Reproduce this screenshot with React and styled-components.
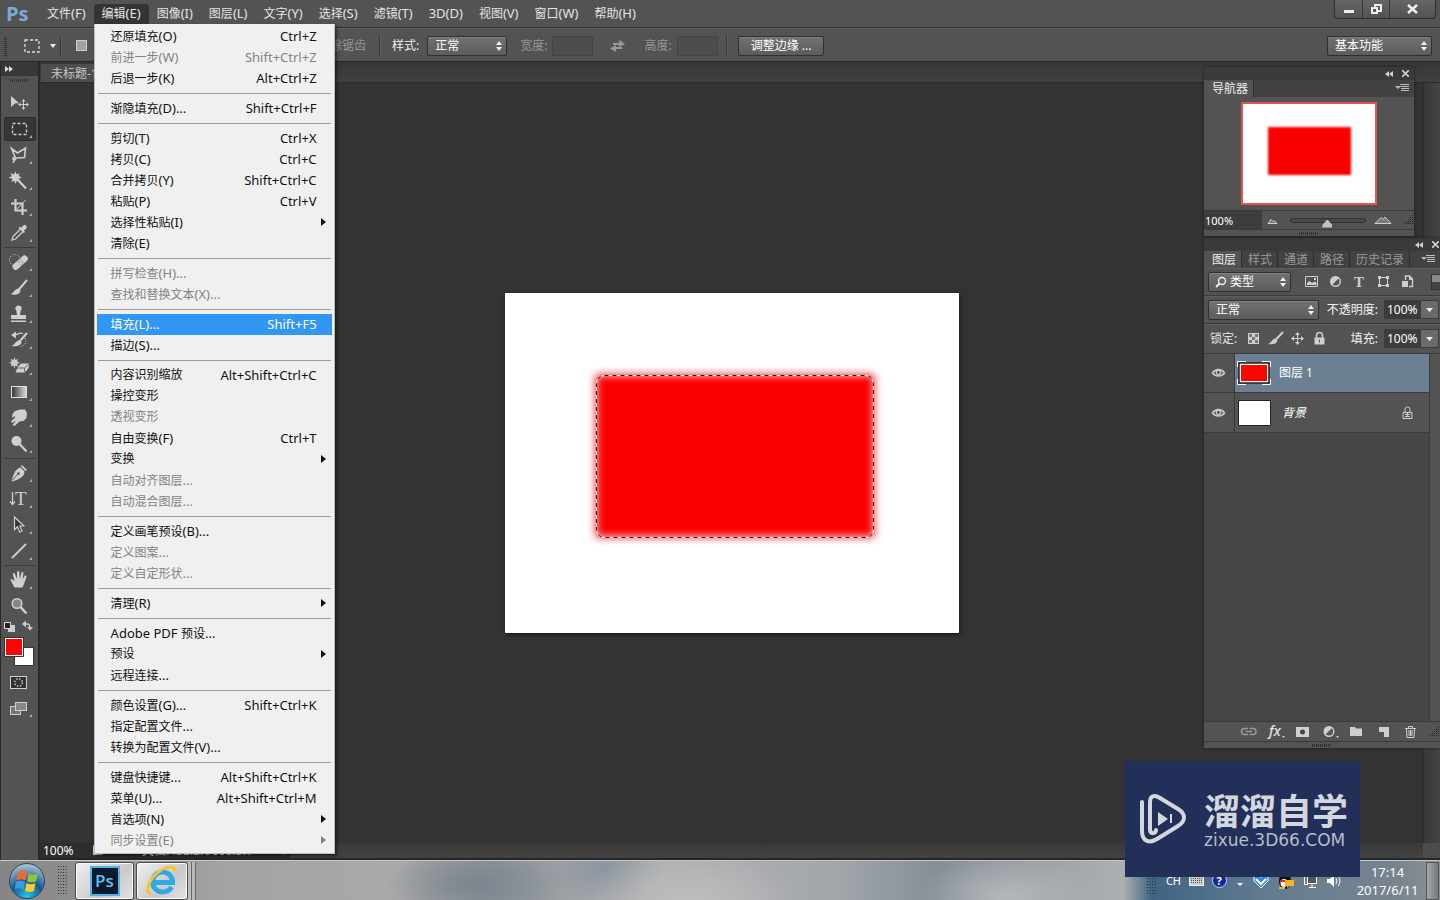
import React, { useState } from 'react';
import styled, { createGlobalStyle } from 'styled-components';

const GlobalStyle = createGlobalStyle`
  * {
    box-sizing: border-box;
  }
  body {
    margin: 0;
    overflow: hidden;
    background: #333;
    color: #e4e4e4;
    font: 12px/16px 'Noto Sans', 'Noto Sans CJK SC', sans-serif;
  }
  button, input, select {
    margin: 0;
    padding: 0;
    border: 0;
    border-radius: 0;
    background: none;
    color: inherit;
    font: inherit;
  }
  ul {
    margin: 0;
    padding: 0;
    list-style: none;
  }
  svg {
    display: block;
    flex: none;
  }
`;

const Desktop = styled.div`
  display: flex;
  flex-direction: column;
  height: 100vh;
`;

const MenuBar = styled.header`
  position: relative;
  z-index: 3;
  display: flex;
  align-items: center;
  height: 28px;
  background: #535353;
  border-bottom: 1px solid #303030;
`;

const Logo = styled.div`
  width: 39px;
  padding-left: 6px;
  color: #7ea9d6;
  font: bold 20px/24px 'Open Sans', sans-serif;
`;

const MenuList = styled.ul`
  display: flex;
  flex: 1;
`;

const MenuSlot = styled.li`
  position: relative;
`;

const MenuButton = styled.button`
  display: block;
  height: 20px;
  padding: 0 8px;
  border-radius: 3px 3px 0 0;
  background: ${(p) => (p.$open ? '#343434' : 'none')};
  white-space: nowrap;
`;

const Latin = styled.span`
  font-size: 13px;
`;

const DropDown = styled.ul`
  position: absolute;
  top: 20px;
  left: 0;
  width: 241px;
  padding: 2px;
  background: #f0f0f0;
  border: 1px solid #bdbdbd;
  border-top-width: 0;
  box-shadow: 2px 2px 3px rgba(0, 0, 0, 0.5);
`;

const DropItem = styled.button`
  display: flex;
  align-items: center;
  width: 100%;
  height: 21px;
  padding: 0 5px 0 14px;
  background: ${(p) => (p.$active ? '#3296f3' : 'none')};
  color: ${(p) => (p.$active ? '#fff' : p.disabled ? '#838383' : '#111')};
  white-space: nowrap;
`;

const DropLabel = styled.span`
  flex: 1;
  text-align: left;
`;

const Shortcut = styled.span`
  padding-right: 10px;
  font-size: 13px;
`;

const Divider = styled.li`
  height: 9px;
  padding: 4px 1px;
  background: #9c9c9c content-box;
`;

const WindowButtons = styled.div`
  display: flex;
  align-self: flex-start;
  height: 19px;
  margin-right: 4px;
  border: 1px solid #303030;
  border-top: 0;
  border-radius: 0 0 4px 4px;
  background: linear-gradient(#666, #525252);
`;

const WindowButton = styled.button`
  display: grid;
  place-items: center;
  width: ${(p) => (p.$wide ? 46 : 27)}px;
  border-left: 1px solid #383838;
  &:first-child {
    border-left: 0;
  }
`;

const OptionsBar = styled.div`
  display: flex;
  align-items: center;
  height: 34px;
  padding: 1px 8px 0 4px;
  border-top: 1px solid #626262;
  border-bottom: 1px solid #282828;
  background: #535353;
  white-space: nowrap;
`;

const Grip = styled.span`
  width: ${(p) => (p.$vertical ? 3 : 20)}px;
  height: ${(p) => (p.$vertical ? 20 : 3)}px;
  background: repeating-linear-gradient(
    ${(p) => (p.$vertical ? '0deg' : '90deg')},
    #333 0 1px,
    transparent 1px 2px
  );
`;

const OptionButton = styled.button`
  display: flex;
  align-items: center;
  gap: 10px;
  width: 53px;
  padding-left: 17px;
`;

const Rule = styled.span`
  width: 2px;
  height: 22px;
  margin-left: ${(p) => p.$left || 0}px;
  border-left: 1px solid #3a3a3a;
  border-right: 1px solid #5e5e5e;
`;

const Swatchlet = styled.span`
  width: 11px;
  height: 11px;
  margin-left: 14px;
  border: 1px solid #ccc;
  background: #a2a2a2;
`;

const AntiAlias = styled.label`
  display: flex;
  justify-content: flex-end;
  width: 279px;
  margin-right: 13px;
  color: #969696;
`;

const AntiAliasBox = styled.input`
  width: 12px;
  height: 12px;
  margin: 2px 4px;
`;

const Field = styled.label`
  display: flex;
  align-items: center;
  gap: ${(p) => p.$gap}px;
  margin-left: ${(p) => p.$left || 0}px;
  color: ${(p) => (p.$dim ? '#969696' : '#f0f0f0')};
`;

const SizeInput = styled.input`
  width: 41px;
  height: 20px;
  border: 1px solid #454545;
  background: #4d4d4d;
`;

const SelectShell = styled.span`
  display: grid;
  grid-template-columns: 1fr 14px;
  align-items: center;
  width: ${(p) => p.$width}px;
  height: 20px;
  border: 1px solid #303030;
  border-radius: 2px;
  background: linear-gradient(#717171, #5c5c5c);
  box-shadow: inset 0 1px 0 #808080;
  color: #fff;
  select {
    grid-area: 1 / 1 / 2 / 3;
    height: 18px;
    padding-left: ${(p) => p.$indent || 7}px;
    appearance: none;
    outline: none;
  }
  option {
    color: #111;
  }
  .arrows {
    grid-area: 1 / 2;
    margin-left: 3px;
    pointer-events: none;
  }
  .lead {
    grid-area: 1 / 1;
    margin-left: 6px;
    pointer-events: none;
  }
`;

const SwapButton = styled.button`
  margin: 0 19px 0 17px;
  color: #999;
`;

const RefineButton = styled.button`
  height: 20px;
  margin-left: 10px;
  padding: 0 12px;
  border: 1px solid #303030;
  border-radius: 2px;
  background: linear-gradient(#717171, #5c5c5c);
  box-shadow: inset 0 1px 0 #808080;
  line-height: 16px;
  color: #fff;
`;

const Spacer = styled.span`
  flex: 1;
`;

const Workspace = styled.main`
  position: relative;
  display: flex;
  flex: 1;
  min-height: 0;
`;

const Toolbox = styled.aside`
  display: flex;
  flex-direction: column;
  align-items: center;
  width: 40px;
  border: solid #2a2a2a;
  border-width: 0 2px 0 1px;
  background: #535353;
  color: #cfcfcf;
`;

const ToolboxHead = styled.div`
  align-self: stretch;
  height: 14px;
  padding: 4px;
  background: #383838;
`;

const ToolGrip = styled.div`
  height: 14px;
  padding-top: 3px;
`;

const ToolButton = styled.button`
  width: 32px;
  height: 24px;
  margin: 1px 0;
  border-radius: 3px;
  background: ${(p) => (p.$on ? '#363636' : 'none')};
  box-shadow: ${(p) => (p.$on ? 'inset 0 0 0 1px #2c2c2c' : 'none')};
`;

const ToolRule = styled.span`
  width: 30px;
  height: 3px;
  padding: 1px 0;
  background: #3b3b3b content-box;
`;

const DocumentArea = styled.section`
  display: flex;
  flex: 1;
  flex-direction: column;
  min-width: 0;
`;

const TabStrip = styled.div`
  display: flex;
  height: 21px;
  padding-top: 2px;
  padding-left: 1px;
  border-bottom: 1px solid #2a2a2a;
  background: linear-gradient(#363636, #404040);
`;

const DocumentTab = styled.button`
  padding: 2px 10px 0;
  background: #4d4d4d;
  color: #c9c9c9;
`;

const Stage = styled.div`
  display: grid;
  flex: 1;
  grid-template-columns: 1fr 17px;
  min-height: 0;
`;

const Canvas = styled.div`
  display: grid;
  place-items: center;
  background: #333;
  svg {
    box-shadow: 1px 2px 4px rgba(0, 0, 0, 0.5);
  }
`;

const ScrollTrack = styled.div`
  border-left: 1px solid #2c2c2c;
  background: linear-gradient(90deg, #383838, #454545);
`;

const StatusBar = styled.footer`
  display: flex;
  height: 17px;
  border-bottom: 2px solid #262626;
  background: linear-gradient(#393939, #424242);
  line-height: 15px;
`;

const StatusInfo = styled.div`
  display: flex;
  align-items: center;
  width: 250px;
  padding-left: 3px;
  background: #2d2d2d;
`;

const ZoomLevel = styled.span`
  width: 50px;
  color: #fff;
`;

const DocSize = styled.span`
  flex: 1;
  padding-left: 38px;
  white-space: nowrap;
`;

const ScrollCorner = styled.span`
  width: 17px;
  margin-left: auto;
  background: #4c4c4c;
`;

const Dock = styled.div`
  position: absolute;
  top: 5px;
  right: 0;
  bottom: 112px;
  display: flex;
  flex-direction: column;
  gap: 2px;
  width: 236px;
`;

const Panel = styled.section`
  display: flex;
  flex-direction: column;
  flex: ${(p) => (p.$grow ? 1 : 'none')};
  width: ${(p) => (p.$grow ? '100%' : '210px')};
  overflow: hidden;
  border-radius: 4px 4px 0 0;
  background: #535353;
  box-shadow: 0 0 3px #1c1c1c;
`;

const PanelHead = styled.div`
  display: flex;
  align-items: center;
  justify-content: flex-end;
  gap: 9px;
  height: 13px;
  padding-right: ${(p) => p.$pad}px;
  background: #3a3a3a;
  color: #d0d0d0;
`;

const PanelTabs = styled.div`
  display: flex;
  align-items: center;
  height: 17px;
  background: #424242;
  color: #c8c8c8;
`;

const PanelTab = styled.button`
  align-self: stretch;
  padding: 1px 6px 0 ${(p) => (p.$on ? 8 : 6)}px;
  background: ${(p) => (p.$on ? '#535353' : '#424242')};
  box-shadow: inset -1px 0 0 #2e2e2e;
  color: ${(p) => (p.$on ? '#eee' : '#999')};
  white-space: nowrap;
`;

const PreviewBox = styled.div`
  display: grid;
  place-items: center;
  height: 114px;
  border-bottom: 1px solid #3a3a3a;
`;

const ZoomRow = styled.div`
  display: flex;
  align-items: center;
  height: 18px;
  color: #d0d0d0;
`;

const ZoomInput = styled.input`
  width: 58px;
  height: 18px;
  padding-left: 1px;
  background: #3d3d3d;
  color: #fff;
  font-size: 11px;
`;

const ZoomSlider = styled.input`
  width: 76px;
  height: 14px;
  margin: 0 8px 0 9px;
  appearance: none;
  background: none;
  &::-webkit-slider-runnable-track {
    height: 5px;
    border: 1px solid #333;
    border-radius: 2px;
    background: #484848;
  }
  &::-webkit-slider-thumb {
    width: 10px;
    height: 8px;
    margin-top: 1px;
    appearance: none;
    background: #c4c4c4;
    clip-path: polygon(50% 0, 100% 70%, 100% 100%, 0 100%, 0 70%);
  }
`;

const PanelFoot = styled.div`
  display: grid;
  place-items: center;
  height: 7px;
  border-top: 1px solid #3a3a3a;
`;

const LayerRow = styled.div`
  display: flex;
  align-items: center;
  height: ${(p) => p.$height || 28}px;
  padding-left: ${(p) => p.$indent || 4}px;
  border-bottom: 1px solid #3a3a3a;
  box-shadow: inset 0 1px 0 #5e5e5e;
  white-space: nowrap;
`;

const IconGroup = styled.div`
  display: flex;
  gap: ${(p) => p.$gap}px;
  margin-left: ${(p) => p.$left}px;
  color: #cfcfcf;
`;

const IconButton = styled.button`
  display: block;
`;

const FilterSwitch = styled.button`
  width: 9px;
  height: 16px;
  margin-left: auto;
  border: 1px solid #333;
  border-right: 0;
  background: linear-gradient(#888 50%, #444 50%);
`;

const PercentField = styled.label`
  display: flex;
  align-items: center;
  margin-left: auto;
  padding-right: 1px;
  color: #f4f4f4;
  input {
    width: 36px;
    height: 19px;
    margin-left: 6px;
    padding-left: 3px;
    background: #3c3c3c;
    color: #fff;
  }
  button {
    display: grid;
    place-items: center;
    width: 19px;
    height: 19px;
    border: 1px solid #3c3c3c;
    background: #6a6a6a;
  }
`;

const LayerList = styled.ul`
  flex: 1;
  margin-right: 10px;
  border-right: 1px solid #3a3a3a;
  background: #464646;
`;

const LayerItem = styled.li`
  display: flex;
  align-items: center;
  height: ${(p) => (p.$on ? 39 : 40)}px;
  border-bottom: 1px solid #3a3a3a;
  background: ${(p) => (p.$on ? '#6d8093' : '#535353')};
`;

const EyeButton = styled.button`
  display: grid;
  place-items: center;
  align-self: stretch;
  width: 31px;
  border-right: 1px solid #3a3a3a;
  background: #535353;
  color: #c8c8c8;
`;

const Thumbnail = styled.svg`
  margin-left: 1px;
`;

const LayerName = styled.span`
  flex: 1;
  padding-left: ${(p) => (p.$italic ? 10 : 7)}px;
  color: #fff;
  font-style: ${(p) => (p.$italic ? 'italic' : 'normal')};
`;

const LayerLock = styled.span`
  margin-right: 13px;
  color: #cfcfcf;
`;

const LayerActions = styled.div`
  display: flex;
  align-items: center;
  justify-content: flex-end;
  gap: 11px;
  height: 20px;
  border-top: 1px solid #3a3a3a;
  color: #cfcfcf;
`;

const Watermark = styled.div`
  position: absolute;
  z-index: 4;
  right: 80px;
  bottom: 23px;
  display: flex;
  align-items: center;
  gap: 17px;
  width: 235px;
  height: 116px;
  padding-left: 14px;
  background: #212f59;
  color: #d5d7de;
`;

const BrandName = styled.div`
  font: bold 36px/36px 'Noto Sans CJK SC', sans-serif;
`;

const BrandUrl = styled.div`
  margin-top: 5px;
  color: #b6bccb;
  font: 17px/16px 'DejaVu Sans', sans-serif;
`;

const Taskbar = styled.footer`
  display: flex;
  align-items: center;
  height: 40px;
  border-top: 1px solid #c4c8cc;
  background:
    radial-gradient(ellipse 90px 40px at 33% 60%, #7c858e, transparent),
    radial-gradient(ellipse 110px 50px at 48% 100%, #bebebe, transparent),
    radial-gradient(ellipse 60px 40px at 42% 20%, #8b95a0, transparent),
    radial-gradient(ellipse 90px 40px at 70% 90%, #b4b8bc, transparent),
    linear-gradient(90deg, #858585, #a4a4a4 16%, #a9a9a9 28%, #8d949b 34%, #b0b0b0 45%, #a2a7ac 58%, #868e97 65%, #adb0b3 78%, #3f6482 80%, #637c90 88%, #78848e 97%, #8c9296);
`;

const StartButton = styled.button`
  margin: 0 13px 0 9px;
`;

const TaskButton = styled.button`
  display: grid;
  place-items: center;
  width: ${(p) => p.$width}px;
  height: 38px;
  margin-left: ${(p) => p.$left}px;
  border: 1px solid #4b4b4b;
  border-radius: 3px;
  background: linear-gradient(135deg, #f0f0f0, #cacaca 60%, #e4e4e4);
  box-shadow: inset 0 0 0 1px #fafafa;
`;

const StackEdge = styled.span`
  width: 4px;
  height: 38px;
  border-right: 1px solid #666;
  background: #bbb;
`;

const Tray = styled.div`
  display: flex;
  align-items: center;
  gap: 8px;
  margin-left: auto;
`;

const TrayText = styled.span`
  margin-left: 2px;
  color: #fff;
  font-size: 11px;
`;

const Clock = styled.div`
  width: 67px;
  margin: 0 5px 0 12px;
  color: #fff;
  font: 13px/18px 'Noto Sans', sans-serif;
  text-align: center;
`;

const ShowDesktop = styled.button`
  width: 13px;
  height: 38px;
  margin-right: 1px;
  border: 1px solid #555;
  background: linear-gradient(90deg, #a5a8aa, #75797c);
`;

const toolIcons = {
  move: (
    <>
      <path fill="currentColor" d="M2 3l8 7-4 .6L2 14z" />
      <path stroke="currentColor" fill="none" d="M14.500 7v9M10 11.500h9" />
      <path fill="currentColor" d="M14.500 6l2 2.500h-4zM14.500 17l2-2.500h-4zM9 11.500l2.500-2v4zM20 11.500l-2.500-2v4z" />
    </>
  ),
  marquee: <path stroke="currentColor" fill="none" strokeWidth="1.300" strokeDasharray="3 2" d="M3.500 4.500h14v11h-14z" />,
  lasso: (
    <path stroke="currentColor" fill="none" strokeWidth="1.600" d="M2.500 3.500L8.500 8l8-5-1 9.500-9 .5zM6.500 12.500c-2-.5-3.500 1-2 2.200 2 .8 2.500-1 2-2.200M5.500 15l-1.500 3" />
  ),
  wand: (
    <>
      <path fill="currentColor" d="M6.500 .500l1.200 3 3-1.500-1 3 3.300 1.500-3.300 1.300 1.200 3-3-1-1.400 3.200-1.200-3.200-3 1.200 1.300-3L-.500 6.500l3.300-1.300L1.500 2l3.300 1.400z" />
      <path stroke="currentColor" strokeWidth="2.200" d="M9 9l8 8.500" />
    </>
  ),
  crop: (
    <>
      <path stroke="currentColor" fill="none" strokeWidth="2.200" d="M6.500 2v11.500H18M2 6.500h11.500V18" />
      <path stroke="currentColor" d="M8 12l8.500-9" />
    </>
  ),
  eyedropper: (
    <>
      <path stroke="currentColor" fill="none" strokeWidth="1.300" d="M11 6.500L4 13.500 3 17l3.500-1 7-7" />
      <path fill="currentColor" d="M9.500 5l1.200-1.200 1.600 1 2-2.300c2-1.500 4.500 1 3 3l-2.300 2 1 1.600-1.200 1.200z" />
    </>
  ),
  heal: (
    <>
      <circle cx="6" cy="8" r="5.500" stroke="currentColor" fill="none" strokeDasharray="1 1.500" />
      <rect x="2" y="7.500" width="18" height="6.500" rx="3" fill="currentColor" transform="rotate(-42 11 10.500)" />
      <path stroke="#666" strokeDasharray="1 1" d="M9 9l4 4.500M11 7.500l4 4.500" />
    </>
  ),
  brush: (
    <>
      <path stroke="currentColor" strokeWidth="2" d="M18 2l-8 9.500" />
      <path fill="currentColor" d="M9.500 10.500l2 2c0 3-4 5.500-10 3.500 3-.5 4-5 8-5.500z" />
    </>
  ),
  stamp: (
    <path fill="currentColor" d="M9.500 1.500a3 3 0 0 1 2.200 5.200L11 11h6v4H2v-4h6l-.7-4.300A3 3 0 0 1 9.500 1.500zM2 16.500h15V18H2z" />
  ),
  history: (
    <>
      <path stroke="currentColor" strokeWidth="2" d="M18 3l-7 8" />
      <path fill="currentColor" d="M10.500 10l2 2c0 3-4 5-10 4 3-1 4-5 8-6zM2 5l5-3.500v7z" />
      <path stroke="currentColor" fill="none" strokeWidth="1.300" d="M5 4.500h3q3-2 6-1" />
      <path stroke="currentColor" fill="none" strokeDasharray="1 1.500" d="M16 8c2 4 0 8-4 8.500" />
    </>
  ),
  eraser: (
    <>
      <path fill="currentColor" d="M5.500 1l1 3L9 3 8.200 5.800l3 1-3 1 1 2.700-2.700-1-1 3-1-3-2.800 1 1-2.700-3-1 3-1L1.700 3l2.800 1z" />
      <path fill="currentColor" d="M12 7.500h8.500L19 13l-3.500 3.500h-9l2-5z" />
      <path stroke="#666" fill="none" d="M8 12h7.500v3.500M15.500 12L20 8" />
    </>
  ),
  gradient: <rect x="2.500" y="4.500" width="15" height="11" fill="url(#toolGradient)" stroke="#e0e0e0" />,
  smudge: (
    <path fill="currentColor" d="M3.500 6L6 3l5-1.500h5L18 5l-.5 5-3 3-4 .5-5 4.500-2-1 3.500-4.500-4 2.500-1-1.500L6.500 9 5 8.500 3 10z" />
  ),
  dodge: (
    <>
      <circle cx="7.500" cy="7" r="5" fill="currentColor" />
      <path stroke="currentColor" strokeWidth="2.200" d="M10.500 10l7 7.500" />
    </>
  ),
  pen: (
    <>
      <path fill="currentColor" d="M13 2l5 5-1.500 1-4.500-4.500zM11.500 4.500l4 4c0 5-4 7-12 10l-1-1C5 10 7 5.500 11.500 4.500z" />
      <circle cx="9.500" cy="10.500" r="1.200" fill="#555" />
      <path stroke="#555" d="M3 17.500L9 11" />
    </>
  ),
  type: (
    <>
      <text x="6" y="16" fill="currentColor" fontFamily="Liberation Serif" fontSize="19">T</text>
      <path stroke="currentColor" fill="none" strokeWidth="1.300" d="M3.500 3v12M1 12.500l2.500 3 2.500-3" />
    </>
  ),
  select: <path stroke="currentColor" fill="#333" strokeWidth="1.200" d="M5.500 2v12.500l3-2.800 2.200 5.300 2.300-1-2.200-5h4z" />,
  line: <path stroke="currentColor" strokeWidth="1.800" d="M3 17L17 3" />,
  hand: (
    <path fill="currentColor" d="M5.500 17.500L1.500 10c0-1.500 1.500-1.500 2.500 0l1.500 1L3.800 4c.3-1.300 1.700-1.300 2.200 0l2 5L8 2c.5-1.300 2-1.300 2.300 0l.5 7 1.700-6.500c.7-1 2-.7 2 .5L13.500 9.500l2-3.500c1-1 2.200-.3 2 1L15 14l-1.500 3.500z" />
  ),
  zoom: (
    <>
      <circle cx="8" cy="7.500" r="4.800" stroke="currentColor" strokeWidth="1.500" fill="#858585" />
      <path stroke="currentColor" strokeWidth="2.500" d="M11.500 11l6 6.500" />
    </>
  ),
  mask: (
    <>
      <rect x="1.500" y="4.500" width="16" height="12" fill="#333" stroke="currentColor" />
      <circle cx="9.500" cy="10.500" r="3.800" fill="none" stroke="currentColor" strokeWidth="1.400" strokeDasharray="1.500 1.500" />
    </>
  ),
  screen: (
    <>
      <rect x="1.500" y="8.500" width="10" height="8" fill="#777" stroke="currentColor" />
      <rect x="6.500" y="4.500" width="11" height="8" fill="#888" stroke="currentColor" />
    </>
  ),
};

const toolGroups = [
  ['move', 'marquee', 'lasso', 'wand', 'crop', 'eyedropper'],
  ['heal', 'brush', 'stamp', 'history', 'eraser', 'gradient', 'smudge', 'dodge'],
  ['pen', 'type', 'select', 'line'],
  ['hand', 'zoom'],
];

const withoutFlyout = ['move', 'zoom', 'mask'];

const panelIcons = {
  image: (
    <>
      <path fill="none" stroke="currentColor" d="M1.500 2.500h12v10h-12z" />
      <path fill="currentColor" d="M3 11V9l2.500-2L8 9l3-1.500 1.500 1.500v2zM10 4h2v2h-2z" />
    </>
  ),
  adjust: (
    <>
      <circle cx="7.500" cy="7.500" r="4.800" fill="#555" stroke="currentColor" strokeWidth="1.400" />
      <path fill="currentColor" d="M11 4a5 5 0 0 1-7 7z" transform="rotate(180 7.500 7.500)" />
    </>
  ),
  text: <text x="2" y="13" fill="currentColor" fontFamily="Liberation Serif" fontSize="15" fontWeight="bold">T</text>,
  shape: (
    <>
      <path fill="none" stroke="currentColor" d="M3.500 3.500h8v8h-8z" />
      <path fill="currentColor" d="M2 2h3v3H2zM10 2h3v3h-3zM2 10h3v3H2zM10 10h3v3h-3z" />
    </>
  ),
  smart: (
    <>
      <path fill="none" stroke="currentColor" strokeWidth="1.400" d="M5.500 6V2h4l3 3v7.500H9" />
      <path fill="currentColor" d="M2 7h6v6H2zM9 2v4h4z" />
    </>
  ),
  pixels: (
    <>
      <path fill="currentColor" d="M2 2h11v11H2z" />
      <path fill="#777" d="M3 3h3v3H3zM9 3h3v3H9zM6 6h3v3H6zM3 9h3v3H3zM9 9h3v3H9z" />
    </>
  ),
  paint: (
    <>
      <path stroke="currentColor" strokeWidth="2" d="M15 1L8 8.500" />
      <path fill="currentColor" d="M7 7.500l2.500 2c-.5 3-4 4.500-9.500 3.500 3-.5 3.500-4.500 7-5.500z" />
    </>
  ),
  position: (
    <>
      <path stroke="currentColor" d="M7.500 2v11M2 7.500h11" />
      <path fill="currentColor" d="M7.500 1L10 4H5zM7.500 14l2.500-3H5zM1 7.500L4 5v5zM14 7.500L11 5v5z" />
    </>
  ),
  lock: (
    <>
      <path fill="none" stroke="currentColor" strokeWidth="1.500" d="M4.500 7V4.500a3 3 0 0 1 6 0V7" />
      <path fill="currentColor" d="M2.500 6.500h10v7h-10z" />
      <path stroke="#555" d="M7.500 8.500v3" />
    </>
  ),
  lockOutline: (
    <>
      <path fill="none" stroke="currentColor" d="M5 7V4.500a2.500 2.500 0 0 1 5 0V7M3 7.500h9v6H3zM5 9.500h5M5 11.500h5" />
      <path stroke="currentColor" d="M7.500 8v4" />
    </>
  ),
  link: (
    <path fill="none" stroke="#999" strokeWidth="1.500" d="M7 4.500H3.500a3 3 0 0 0 0 6H7M8.500 4.500H12a3 3 0 0 1 0 6H8.500M4.500 7.500h6.500" />
  ),
  fx: (
    <>
      <text x="1" y="12" fill="#e4e4e4" fontFamily="Noto Sans" fontStyle="italic" fontWeight="500" fontSize="14">fx</text>
      <path fill="currentColor" d="M14 12h3l-1.500 2z" />
    </>
  ),
  addMask: (
    <>
      <path fill="currentColor" d="M1 3h13v10H1z" />
      <circle cx="7.500" cy="8" r="2.500" fill="#444" />
    </>
  ),
  fillLayer: (
    <>
      <circle cx="7" cy="7.500" r="4.800" fill="#555" stroke="currentColor" strokeWidth="1.400" />
      <path fill="currentColor" d="M11 4a5 5 0 0 1-7 7z" transform="rotate(180 7 7.500)" />
      <path fill="currentColor" d="M14 12h3l-1.500 2z" />
    </>
  ),
  folder: <path fill="currentColor" d="M1 3h5l1 1.500h6V12H1z" />,
  page: <path fill="currentColor" d="M3 3h10v10H8V8H3z" />,
  trash: (
    <path fill="none" stroke="currentColor" d="M2 4.500h11M5.500 4V2.500h4V4M3.500 5l.5 8.500h7l.5-8.500M6 6v6M7.500 6v6M9 6v6" />
  ),
  eye: (
    <>
      <path fill="none" stroke="currentColor" strokeWidth="1.600" d="M1.500 8C4.500 3.500 10.500 3.500 13.500 8 10.500 12 4.500 12 1.500 8z" />
      <circle cx="7.500" cy="7.500" r="2.800" fill="currentColor" />
      <circle cx="7.500" cy="7.500" r="1.300" fill="#333" />
    </>
  ),
};

const PanelIcon = ({ name }) => (
  <svg width="16" height="16" viewBox="0 0 16 16" overflow="visible">
    {panelIcons[name]}
  </svg>
);

const menus = ['文件(F)', '编辑(E)', '图像(I)', '图层(L)', '文字(Y)', '选择(S)', '滤镜(T)', '3D(D)', '视图(V)', '窗口(W)', '帮助(H)'];

const editMenu = [
  [
    { label: '还原填充(O)', keys: 'Ctrl+Z' },
    { label: '前进一步(W)', keys: 'Shift+Ctrl+Z', disabled: true },
    { label: '后退一步(K)', keys: 'Alt+Ctrl+Z' },
  ],
  [{ label: '渐隐填充(D)...', keys: 'Shift+Ctrl+F' }],
  [
    { label: '剪切(T)', keys: 'Ctrl+X' },
    { label: '拷贝(C)', keys: 'Ctrl+C' },
    { label: '合并拷贝(Y)', keys: 'Shift+Ctrl+C' },
    { label: '粘贴(P)', keys: 'Ctrl+V' },
    { label: '选择性粘贴(I)', sub: true },
    { label: '清除(E)' },
  ],
  [
    { label: '拼写检查(H)...', disabled: true },
    { label: '查找和替换文本(X)...', disabled: true },
  ],
  [{ label: '填充(L)...', keys: 'Shift+F5', active: true }, { label: '描边(S)...' }],
  [
    { label: '内容识别缩放', keys: 'Alt+Shift+Ctrl+C' },
    { label: '操控变形' },
    { label: '透视变形', disabled: true },
    { label: '自由变换(F)', keys: 'Ctrl+T' },
    { label: '变换', sub: true },
    { label: '自动对齐图层...', disabled: true },
    { label: '自动混合图层...', disabled: true },
  ],
  [
    { label: '定义画笔预设(B)...' },
    { label: '定义图案...', disabled: true },
    { label: '定义自定形状...', disabled: true },
  ],
  [{ label: '清理(R)', sub: true }],
  [{ label: 'Adobe PDF 预设...' }, { label: '预设', sub: true }, { label: '远程连接...' }],
  [
    { label: '颜色设置(G)...', keys: 'Shift+Ctrl+K' },
    { label: '指定配置文件...' },
    { label: '转换为配置文件(V)...' },
  ],
  [
    { label: '键盘快捷键...', keys: 'Alt+Shift+Ctrl+K' },
    { label: '菜单(U)...', keys: 'Alt+Shift+Ctrl+M' },
    { label: '首选项(N)', sub: true },
    { label: '同步设置(E)', sub: true, disabled: true },
  ],
];

// Latin runs are set one size larger than the Chinese around them
const MixedText = ({ text }) =>
  text
    .split(/([\x20-\x7e]+)/)
    .filter(Boolean)
    .map((part, i) => (/^[\x20-\x7e]/.test(part) ? <Latin key={i}>{part}</Latin> : part));

const EditMenu = () => (
  <DropDown>
    {editMenu.map((group, i) => (
      <React.Fragment key={i}>
        {i > 0 && <Divider />}
        {group.map((item) => (
          <li key={item.label}>
            <DropItem $active={item.active} disabled={item.disabled}>
              <DropLabel>
                <MixedText text={item.label} />
              </DropLabel>
              {item.keys && <Shortcut>{item.keys}</Shortcut>}
              {item.sub && (
                <svg width="6" height="8">
                  <path fill="currentColor" d="M0 0l5 4-5 4z" />
                </svg>
              )}
            </DropItem>
          </li>
        ))}
      </React.Fragment>
    ))}
  </DropDown>
);

const Select = ({ label, width, indent, options, children }) => (
  <SelectShell $width={width} $indent={indent}>
    <select aria-label={label}>
      {options.map((o) => (
        <option key={o}>{o}</option>
      ))}
    </select>
    {children}
    <svg className="arrows" width="8" height="10">
      <path fill="#eee" d="M1 4l3-4 3 4zM1 6l3 4 3-4z" />
    </svg>
  </SelectShell>
);

const Tool = ({ name, on, onPick }) => (
  <ToolButton $on={on} aria-label={name} onClick={onPick}>
    <svg width="32" height="24">
      <g transform="translate(5 2)">{toolIcons[name]}</g>
      {!withoutFlyout.includes(name) && <path fill="#aaa" d="M28 18v3h-3z" />}
    </svg>
  </ToolButton>
);

const Toolbar = () => {
  const [tool, setTool] = useState('marquee');
  return (
    <Toolbox>
      <ToolboxHead>
        <svg width="9" height="6">
          <path fill="#ddd" d="M0 0l4 3-4 3zM4 0l4 3-4 3z" />
        </svg>
      </ToolboxHead>
      <ToolGrip>
        <Grip as="div" />
      </ToolGrip>
      {toolGroups.map((group, i) => (
        <React.Fragment key={i}>
          {i > 0 && <ToolRule />}
          {group.map((name) => (
            <Tool key={name} name={name} on={tool === name} onPick={() => setTool(name)} />
          ))}
        </React.Fragment>
      ))}
      <svg width="34" height="50" viewBox="1 0 34 50">
        <path fill="#ccc" d="M6 6h7v7H6z" />
        <path fill="#222" stroke="#ddd" d="M2.500 3.500h6v6h-6z" />
        <path fill="none" stroke="#ccc" strokeWidth="1.500" d="M22 5h3.500q2.500 0 2.500 5" />
        <path fill="#ccc" d="M20 5l4-3.500v7zM25 8h6l-3 3.500z" />
        <path fill="#fff" stroke="#333" d="M12.500 28.500h19v18h-19z" />
        <path fill="#fa0500" stroke="#fff" d="M3.500 19.500h17v17h-17z" />
        <path fill="none" stroke="#333" d="M2.500 18.500h19v19h-19z" />
      </svg>
      <Tool name="mask" />
      <Tool name="screen" />
    </Toolbox>
  );
};

const Artwork = () => (
  <svg width="454" height="340" viewBox="0 0 454 340">
    <defs>
      <filter id="feather" x="-10%" y="-15%" width="120%" height="130%">
        <feGaussianBlur stdDeviation="4" />
      </filter>
    </defs>
    <rect width="454" height="340" fill="#fff" />
    <rect x="91" y="82" width="278" height="162" fill="#fb0600" filter="url(#feather)" />
    <rect x="91.500" y="82.500" width="277" height="162" rx="8" fill="none" stroke="#fff" />
    <rect x="91.500" y="82.500" width="277" height="162" rx="8" fill="none" stroke="#111" strokeDasharray="4 4" />
  </svg>
);

const PanelMenuIcon = () => (
  <svg width="19" height="9">
    <path fill="#bbb" d="M0 2h6L3 5z" />
    <path stroke="#bbb" d="M5 .500h9M6 2.500h8M6 4.500h8M6 6.500h8" />
  </svg>
);

const ResizeCorner = () => (
  <svg width="10" height="10">
    <path stroke="#222" strokeDasharray="1 1" d="M8 .500h2M6 2.500h4M4 4.500h6M2 6.500h8M0 8.500h10" />
  </svg>
);

const PanelHeader = ({ pad }) => (
  <PanelHead $pad={pad}>
    <svg width="8" height="6">
      <path fill="currentColor" d="M4 0v6L0 3zM8 0v6L4 3z" />
    </svg>
    <svg width="7" height="7">
      <path stroke="currentColor" strokeWidth="1.600" d="M0 0l7 7M7 0L0 7" />
    </svg>
  </PanelHead>
);

const Navigator = () => (
  <Panel>
    <PanelHeader pad={5} />
    <PanelTabs>
      <PanelTab $on>导航器</PanelTab>
      <Spacer />
      <PanelMenuIcon />
    </PanelTabs>
    <PreviewBox>
      <svg width="136" height="103" viewBox="0 0 136 103">
        <defs>
          <filter id="softEdge">
            <feGaussianBlur stdDeviation="1" />
          </filter>
        </defs>
        <rect x="1" y="1" width="134" height="101" fill="#fff" stroke="#e2554f" strokeWidth="2" />
        <rect x="27" y="25" width="83" height="48" fill="#fb0600" filter="url(#softEdge)" />
      </svg>
    </PreviewBox>
    <ZoomRow>
      <ZoomInput aria-label="缩放" defaultValue="100%" />
      <svg width="19" height="10">
        <path fill="#777" stroke="currentColor" d="M6 8.500l3-4 2 2 1-1 3 3z" />
      </svg>
      <ZoomSlider type="range" aria-label="缩放比例" defaultValue="49" />
      <svg width="18" height="10">
        <path fill="#777" stroke="currentColor" d="M1 8.500l6-6 2 2 2-2.500 6 6.500z" />
      </svg>
      <Spacer />
      <ResizeCorner />
    </ZoomRow>
    <PanelFoot>
      <Grip />
    </PanelFoot>
  </Panel>
);

const Percent = ({ label }) => (
  <PercentField>
    {label}:
    <input defaultValue="100%" />
    <button aria-label={`${label}选项`}>
      <svg width="7" height="4">
        <path fill="#eee" d="M0 0h7L3.500 4z" />
      </svg>
    </button>
  </PercentField>
);

const IconRow = ({ names, gap, left }) => (
  <IconGroup $gap={gap} $left={left}>
    {names.map((name) => (
      <IconButton key={name} aria-label={name}>
        <PanelIcon name={name} />
      </IconButton>
    ))}
  </IconGroup>
);

const Layers = () => (
  <Panel $grow>
    <PanelHeader pad={1} />
    <PanelTabs>
      {['图层', '样式', '通道', '路径', '历史记录'].map((tab, i) => (
        <PanelTab key={tab} $on={i === 0}>
          {tab}
        </PanelTab>
      ))}
      <Spacer />
      <PanelMenuIcon />
    </PanelTabs>
    <LayerRow>
      <Select label="过滤" width={83} indent={21} options={['类型', '名称', '效果']}>
        <svg className="lead" width="12" height="12">
          <circle cx="7" cy="5" r="3.500" fill="none" stroke="#eee" strokeWidth="1.400" />
          <path stroke="#eee" strokeWidth="2" d="M4.500 7.500L1 11" />
        </svg>
      </Select>
      <IconRow names={['image', 'adjust', 'text', 'shape', 'smart']} gap={8} left={13} />
      <FilterSwitch aria-label="打开或关闭图层过滤" />
    </LayerRow>
    <LayerRow>
      <Select label="混合模式" width={111} options={['正常', '溶解', '变暗']} />
      <Percent label="不透明度" />
    </LayerRow>
    <LayerRow $height={30} $indent={6}>
      锁定:
      <IconRow names={['pixels', 'paint', 'position', 'lock']} gap={6} left={9} />
      <Percent label="填充" />
    </LayerRow>
    <LayerList>
      <LayerItem $on>
        <EyeButton aria-label="显示图层 1">
          <PanelIcon name="eye" />
        </EyeButton>
        <Thumbnail width="36" height="26" viewBox="0 0 36 26">
          <path fill="#fff" stroke="#222" strokeWidth="1.500" d="M3 3h30v20H3z" />
          <path fill="#fb0600" d="M5 5h26v16H5z" />
          <path fill="none" stroke="#fff" d="M1.500 7V1.500H10M26 1.500h8.500V7M34.500 19v5.500H26M10 24.500H1.500V19" />
        </Thumbnail>
        <LayerName>图层 1</LayerName>
      </LayerItem>
      <LayerItem>
        <EyeButton aria-label="显示背景">
          <PanelIcon name="eye" />
        </EyeButton>
        <Thumbnail width="36" height="26" viewBox="0 0 36 26">
          <path fill="#fff" stroke="#222" d="M2.500 .500h32v25h-32z" />
        </Thumbnail>
        <LayerName $italic>背景</LayerName>
        <LayerLock>
          <PanelIcon name="lockOutline" />
        </LayerLock>
      </LayerItem>
    </LayerList>
    <LayerActions>
      {['link', 'fx', 'addMask', 'fillLayer', 'folder', 'page', 'trash'].map((name) => (
        <IconButton key={name} aria-label={name}>
          <PanelIcon name={name} />
        </IconButton>
      ))}
      <ResizeCorner />
    </LayerActions>
    <PanelFoot>
      <Grip />
    </PanelFoot>
  </Panel>
);

const StartOrb = () => (
  <svg width="36" height="36" viewBox="0 0 36 36">
    <defs>
      <radialGradient id="orb" cx="50%" cy="95%" r="90%">
        <stop offset="0" stopColor="#27c9f0" />
        <stop offset="0.500" stopColor="#135a94" />
        <stop offset="1" stopColor="#a9bccb" />
      </radialGradient>
    </defs>
    <circle cx="18" cy="18" r="17.500" fill="url(#orb)" stroke="#2a4660" />
    <path fill="#ef6a2a" d="M9 9.500q4-3 9 0l-1.500 8q-4.500-2.500-9 0z" />
    <path fill="#8cc63f" d="M19.500 10.500q4.500 2.500 9.500 0l-2 8q-4.500 2-9 0z" />
    <path fill="#3f9be0" d="M7 19q4.500-2.500 9 0l-1.500 7.500q-4.500-2.500-9 0z" />
    <path fill="#fccb2f" d="M17.500 20q4.500 2.500 9 0L25 28q-4.500 2-9 0z" />
  </svg>
);

const Dots = () => (
  <svg width="9" height="32">
    <path stroke="#333" strokeDasharray="1 2" d="M.5 1v30M3 1v30M5.500 1v30M8 1v30" />
  </svg>
);

const TrayIcons = () => (
  <>
    <svg width="15" height="12">
      <rect x=".5" y="1.500" width="14" height="9" fill="#ccc" stroke="#eee" />
      <path stroke="#555" strokeDasharray="1 1" d="M2 3.500h11M2 5.500h11M2 7.500h11" />
    </svg>
    <svg width="15" height="15">
      <circle cx="7.500" cy="7.500" r="7" fill="#1527a0" stroke="#c8d0f0" />
      <text x="4.500" y="12" fill="#fff" fontSize="11" fontWeight="bold" fontFamily="Noto Sans">?</text>
    </svg>
    <svg width="10" height="14">
      <path fill="#fff" d="M2 9h6l-3 3z" />
    </svg>
    <svg width="16" height="16">
      <path fill="#2e8ae6" stroke="#fff" d="M1 2l7 2 7-2v6l-7 7-7-7z" />
      <path fill="none" stroke="#fff" strokeWidth="2" d="M3 6l5 5 5-5" />
    </svg>
    <svg width="17" height="17">
      <ellipse cx="8" cy="9" rx="6" ry="8" fill="#111" />
      <ellipse cx="7" cy="11" rx="3.500" ry="4" fill="#fff" />
      <path fill="#d82c1c" d="M3 8h9v2H3z" />
      <path fill="#f7b321" d="M2 15h6v2H2zM8 8h9v6h-5l-2 2v-2H8z" />
    </svg>
    <svg width="16" height="16">
      <rect x="5.500" y="2.500" width="9" height="8" fill="#555" stroke="#fff" />
      <path fill="none" stroke="#fff" d="M2.500 1v10.500H6M7 14.500h7M10 11v3M.500 2.500h4" />
    </svg>
    <svg width="16" height="16">
      <path fill="#fff" d="M1 6h3l4-4v12l-4-4H1z" />
      <path fill="none" stroke="#fff" d="M10 5q2 3 0 6M12 3q4 5 0 10" />
    </svg>
  </>
);

const App = () => (
  <Desktop>
    <GlobalStyle />
    <MenuBar>
      <Logo>Ps</Logo>
      <MenuList>
        {menus.map((name, i) => (
          <MenuSlot key={name}>
            <MenuButton $open={i === 1}>
              <MixedText text={name} />
            </MenuButton>
            {i === 1 && <EditMenu />}
          </MenuSlot>
        ))}
      </MenuList>
      <WindowButtons>
        <WindowButton aria-label="最小化">
          <svg width="10" height="12">
            <path fill="#eee" d="M0 7h10v3H0z" />
          </svg>
        </WindowButton>
        <WindowButton aria-label="还原">
          <svg width="13" height="12">
            <path fill="none" stroke="#eee" strokeWidth="2" d="M5 6V2h6v6H7M2 5h5v5H2z" />
          </svg>
        </WindowButton>
        <WindowButton $wide aria-label="关闭">
          <svg width="11" height="10">
            <path stroke="#eee" strokeWidth="2.500" d="M1 1l9 8M10 1L1 9" />
          </svg>
        </WindowButton>
      </WindowButtons>
    </MenuBar>

    <OptionsBar>
      <Grip $vertical />
      <OptionButton aria-label="矩形选框工具">
        <svg width="16" height="14">
          <path fill="none" stroke="#ddd" strokeWidth="1.300" strokeDasharray="3 2" d="M1 1h14v12H1z" />
        </svg>
        <svg width="6" height="4">
          <path fill="#eee" d="M0 0h6L3 4z" />
        </svg>
      </OptionButton>
      <Rule />
      <Swatchlet />
      <AntiAlias>
        <AntiAliasBox type="checkbox" disabled />
        消除锯齿
      </AntiAlias>
      <Rule />
      <Field $left={11} $gap={8}>
        样式:
        <Select label="样式" width={80} options={['正常', '固定比例', '固定大小']} />
      </Field>
      <Field $left={13} $gap={5} $dim>
        宽度:
        <SizeInput disabled />
      </Field>
      <SwapButton aria-label="高度和宽度互换">
        <svg width="15" height="12">
          <path fill="currentColor" d="M3 3h6V0l6 4-6 3V5H3zM12 7H6V5L0 8.500 6 12v-3h6z" />
        </svg>
      </SwapButton>
      <Field $gap={5} $dim>
        高度:
        <SizeInput disabled />
      </Field>
      <Rule $left={8} />
      <RefineButton>调整边缘 ...</RefineButton>
      <Spacer />
      <Select label="工作区" width={105} options={['基本功能', '绘画', '摄影']} />
    </OptionsBar>

    <Workspace>
      <svg width="0" height="0">
        <defs>
          <linearGradient id="toolGradient">
            <stop offset="0" stopColor="#333" />
            <stop offset="1" stopColor="#ddd" />
          </linearGradient>
        </defs>
      </svg>
      <Toolbar />
      <DocumentArea>
        <TabStrip>
          <DocumentTab>未标题-1</DocumentTab>
        </TabStrip>
        <Stage>
          <Canvas>
            <Artwork />
          </Canvas>
          <ScrollTrack />
        </Stage>
        <StatusBar>
          <StatusInfo>
            <ZoomLevel>100%</ZoomLevel>
            <svg width="11" height="11">
              <path fill="none" stroke="#ccc" d="M.500 .500h9v9h-9z" />
            </svg>
            <DocSize>文档:452.2K/600.5K</DocSize>
            <svg width="6" height="8">
              <path fill="#ccc" d="M0 0l5 4-5 4z" />
            </svg>
          </StatusInfo>
          <ScrollCorner />
        </StatusBar>
      </DocumentArea>
      <Dock>
        <Navigator />
        <Layers />
      </Dock>
    </Workspace>

    <Taskbar>
      <StartButton aria-label="开始">
        <StartOrb />
      </StartButton>
      <Dots />
      <TaskButton $width={59} $left={8} aria-label="Photoshop">
        <svg width="30" height="30">
          <path fill="#0c1a2b" stroke="#4fb4e8" strokeWidth="2" d="M1 1h28v28H1z" />
          <text x="5" y="21" fill="#5cc3f5" fontFamily="Open Sans" fontSize="17" fontWeight="600">Ps</text>
        </svg>
      </TaskButton>
      <TaskButton $width={52} $left={2} aria-label="Internet Explorer">
        <svg width="34" height="34">
          <path fill="none" stroke="#2fa9e6" strokeWidth="5" d="M9 18.500H27.500C27.500 12 23 8 17.500 8S7.500 12.500 7.500 18 12 28 17.500 28c4 0 7-1.500 9-5" />
          <path fill="none" stroke="#f4c430" strokeWidth="3" d="M30 8C31 0 19 2 10 11 3 18 0 29 6 30" />
        </svg>
      </TaskButton>
      <StackEdge />
      <StackEdge />
      <Tray>
        <Dots />
        <TrayText>CH</TrayText>
        <TrayIcons />
      </Tray>
      <Clock>
        <div>17:14</div>
        <div>2017/6/11</div>
      </Clock>
      <ShowDesktop aria-label="显示桌面" />
    </Taskbar>

    <Watermark>
      <svg width="48" height="52" viewBox="0 0 48 52">
        <path fill="none" stroke="currentColor" strokeWidth="4" strokeLinecap="round" d="M3 9v29c0 10 7 13 15 8l21-13c8-5 8-12 0-17L21 5c-6-4-10-2-10 4v27c0 6 6 5 6 1" />
        <path fill="currentColor" d="M19 19l10 7-10 7zM31 21h2v9h-2z" />
      </svg>
      <div>
        <BrandName>溜溜自学</BrandName>
        <BrandUrl>zixue.3D66.COM</BrandUrl>
      </div>
    </Watermark>
  </Desktop>
);

export default App;
